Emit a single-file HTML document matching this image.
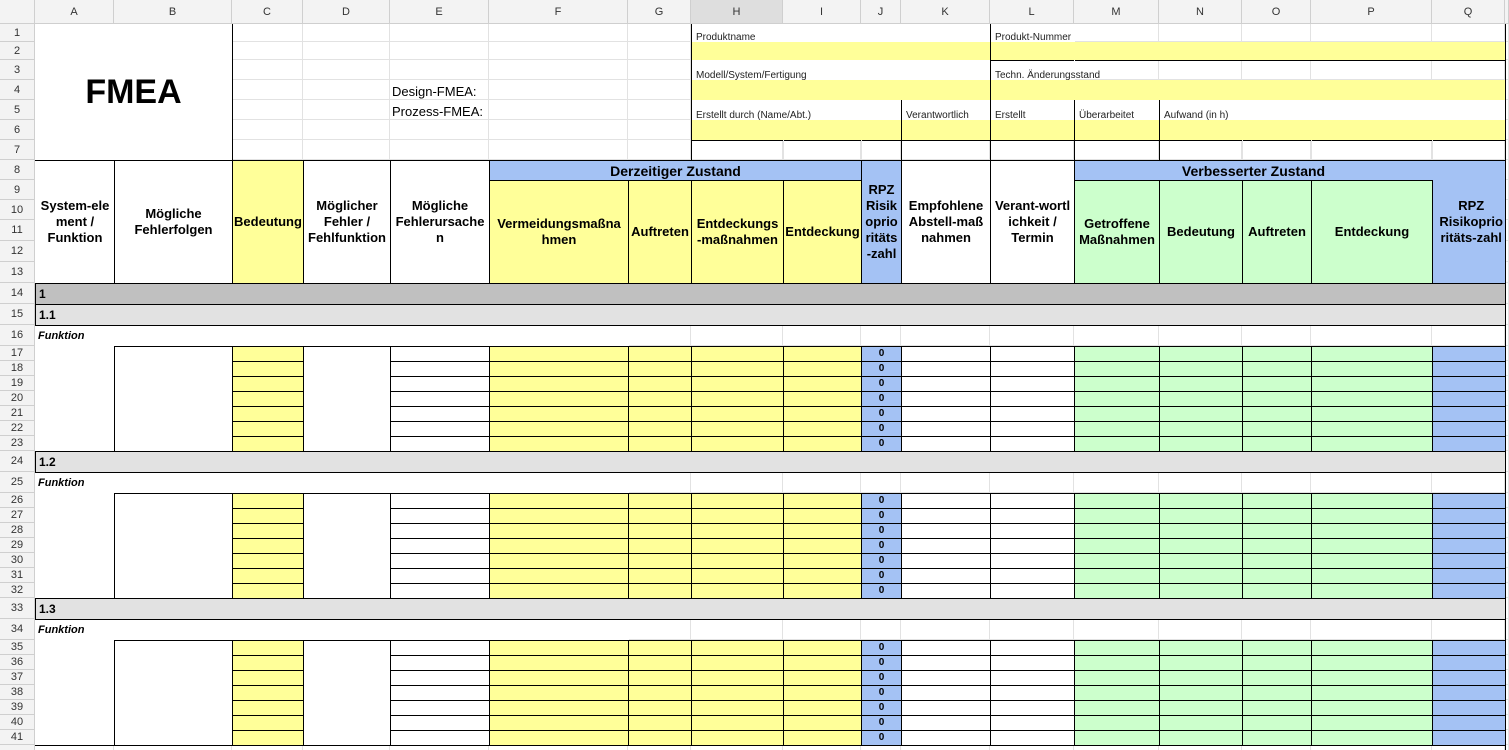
<!DOCTYPE html>
<html><head><meta charset="utf-8">
<style>
html,body{margin:0;padding:0;background:#fff;width:1509px;height:750px;overflow:hidden;position:relative;font-family:"Liberation Sans",Arial,sans-serif;}
.c{position:absolute;box-sizing:border-box;}
.g{border-right:1px solid #e2e2e2;border-bottom:1px solid #e2e2e2;}
.b{border:1px solid #000;}
.t{display:flex;align-items:center;justify-content:center;text-align:center;font-weight:bold;font-size:13px;line-height:16px;color:#000;}
.hd{background:#f3f3f3;border-right:1px solid #cfcfcf;border-bottom:1px solid #cfcfcf;color:#333;font-size:11px;display:flex;align-items:center;justify-content:center;}
.lbl{font-size:10px;color:#222;padding-left:4px;display:flex;align-items:flex-end;white-space:nowrap;}
</style></head><body>
<div id="root"></div>
<script>
var X=[35,114,232,303,390,489,628,691,783,861,901,990,1074,1159,1242,1311,1432,1505,1509];
var H=[24,18,18,20,20,20,20,20,20,20,20,21,21,21,21,21,21,15,15,15,15,15,15,15,21,21,15,15,15,15,15,15,15,21,21,15,15,15,15,15,15,15,21];
var Y=[24];for(var i=1;i<H.length;i++)Y.push(Y[i-1]+H[i]);
var root=document.getElementById('root');var out='';
function box(x,y,w,h,cls,style,html){out+='<div class="c '+cls+'" style="left:'+x+'px;top:'+y+'px;width:'+w+'px;height:'+h+'px;'+(style||'')+'">'+(html||'')+'</div>';}
function R(c1,r1,c2,r2,cls,style,html){var x=X[c1],y=Y[r1-1];box(x,y,X[c2+1]-x+1,Y[r2]-y+1,cls,style,html);}
for(var r=1;r<H.length;r++)for(var c=0;c<18;c++){box(X[c],Y[r-1],X[c+1]-X[c],H[r],'g','');}
box(0,0,35,24,'hd','');
var L='ABCDEFGHIJKLMNOPQ';
for(var c=0;c<17;c++)box(X[c],0,X[c+1]-X[c],24,'hd',c==7?'background:#dedede;':'',L[c]);
box(1505,0,4,24,'hd','');
for(var r=1;r<H.length;r++)box(0,Y[r-1],35,H[r],'hd','',r<42?r:'');
var Y8='#ffff99',G8='#ccffcc',B8='#a4c2f4';
R(0,1,1,7,'t','background:#fff;border-right:1px solid #000;border-bottom:1px solid #000;font-size:34px;','FMEA');
box(392,84,100,16,'','font-size:13px;','Design-FMEA:');
box(392,104,100,16,'','font-size:13px;','Prozess-FMEA:');
R(7,1,10,1,'lbl','background:#fff;border-left:1px solid #000;','Produktname');
R(7,2,10,2,'','background:'+Y8+';border-left:1px solid #000;border-bottom:1px solid #000;');
R(11,1,11,1,'lbl','background:#fff;border-left:1px solid #000;','Produkt-Nummer');
R(11,2,16,2,'','background:'+Y8+';border-left:1px solid #000;border-bottom:1px solid #000;border-right:1px solid #000;');
R(7,3,10,3,'lbl','background:#fff;border-left:1px solid #000;','Modell/System/Fertigung');
R(7,4,10,4,'','background:'+Y8+';border-left:1px solid #000;border-bottom:1px solid #000;');
R(11,3,11,3,'lbl','background:#fff;border-left:1px solid #000;','Techn. Änderungsstand');
R(11,4,16,4,'','background:'+Y8+';border-left:1px solid #000;border-bottom:1px solid #000;border-right:1px solid #000;');
R(7,5,9,5,'lbl','background:#fff;border-left:1px solid #000;','Erstellt durch (Name/Abt.)');
R(7,6,9,6,'','background:'+Y8+';border-left:1px solid #000;border-bottom:1px solid #000;');
var top5=[[10,10,'Verantwortlich'],[11,11,'Erstellt'],[12,12,'Überarbeitet'],[13,16,'Aufwand (in h)']];
top5.forEach(function(a){R(a[0],5,a[1],5,'lbl','background:#fff;border-left:1px solid #000;'+(a[1]==16?'border-right:1px solid #000;':''),a[2]);R(a[0],6,a[1],6,'','background:'+Y8+';border-left:1px solid #000;border-bottom:1px solid #000;'+(a[1]==16?'border-right:1px solid #000;':''));});
[[7,9],[10,10],[11,11],[12,12],[13,16]].forEach(function(a){R(a[0],7,a[1],7,'','border-left:1px solid #000;border-bottom:1px solid #000;'+(a[1]==16?'border-right:1px solid #000;':''));});
box(783,140,1,20,'','background:#e2e2e2;');box(861,140,1,20,'','background:#e2e2e2;');
box(1242,140,1,20,'','background:#e2e2e2;');box(1311,140,1,20,'','background:#e2e2e2;');box(1432,140,1,20,'','background:#e2e2e2;');
R(0,8,0,13,'t','background:#fff;border-top:1px solid #000;border-bottom:1px solid #000;','System-ele<br>ment /<br>Funktion');
R(1,8,1,13,'t b','background:#fff;','Mögliche<br>Fehlerfolgen');
R(2,8,2,13,'t b','background:'+Y8+';','Bedeutung');
R(3,8,3,13,'t b','background:#fff;','Möglicher<br>Fehler /<br>Fehlfunktion');
R(4,8,4,13,'t b','background:#fff;','Mögliche<br>Fehlerursache<br>n');
R(5,8,8,8,'t b','background:'+B8+';font-size:14px;','Derzeitiger Zustand');
R(5,9,5,13,'t b','background:'+Y8+';','Vermeidungsmaßna<br>hmen');
R(6,9,6,13,'t b','background:'+Y8+';','Auftreten');
R(7,9,7,13,'t b','background:'+Y8+';','Entdeckungs<br>-maßnahmen');
R(8,9,8,13,'t b','background:'+Y8+';','Entdeckung');
R(9,8,9,13,'t b','background:'+B8+';','RPZ<br>Risik<br>oprio<br>ritäts<br>-zahl');
R(10,8,10,13,'t b','background:#fff;','Empfohlene<br>Abstell-maß<br>nahmen');
R(11,8,11,13,'t b','background:#fff;','Verant-wortl<br>ichkeit /<br>Termin');
R(12,8,16,13,'t b','background:'+B8+';justify-content:flex-end;padding-right:2px;','RPZ<br>Risikoprio<br>ritäts-zahl');
R(12,8,15,8,'t','font-size:14px;','Verbesserter Zustand');
R(12,9,12,13,'t b','background:'+G8+';','Getroffene<br>Maßnahmen');
R(13,9,13,13,'t b','background:'+G8+';','Bedeutung');
R(14,9,14,13,'t b','background:'+G8+';','Auftreten');
R(15,9,15,13,'t b','background:'+G8+';','Entdeckung');
function grp(r,bg,txt){R(0,r,16,r,'b','background:'+bg+';font-weight:bold;font-size:12px;display:flex;align-items:center;padding-left:3px;',txt);}
function fn(r){R(0,r,5,r,'','background:#fff;font-weight:bold;font-style:italic;font-size:11px;display:flex;align-items:center;padding-left:3px;','Funktion');}
function data(s){
  R(0,s,0,s+6,'','background:#fff;border-bottom:1px solid #000;');
  R(1,s,1,s+6,'b','background:#fff;');
  R(3,s,3,s+6,'b','background:#fff;');
  for(var r=s;r<s+7;r++){
    R(2,r,2,r,'b','background:'+Y8+';');
    R(4,r,4,r,'b','background:#fff;');
    for(var c=5;c<=8;c++)R(c,r,c,r,'b','background:'+Y8+';');
    R(9,r,9,r,'b t','background:'+B8+';font-size:10px;line-height:10px;','0');
    R(10,r,10,r,'b','background:#fff;');R(11,r,11,r,'b','background:#fff;');
    for(var c=12;c<=15;c++)R(c,r,c,r,'b','background:'+G8+';');
    R(16,r,16,r,'b','background:'+B8+';');
  }
}
fn(16);fn(25);fn(34);
grp(14,'#c0c0c0','1');grp(15,'#e2e2e2','1.1');data(17);
grp(24,'#e2e2e2','1.2');data(26);
grp(33,'#e2e2e2','1.3');data(35);
box(1505,24,1,726,'','background:#000;');
box(991,42,83,18,'','background:#ffff99;');
box(990,60,84,1,'','background:#000;');
root.innerHTML=out;
</script>
</body></html>
